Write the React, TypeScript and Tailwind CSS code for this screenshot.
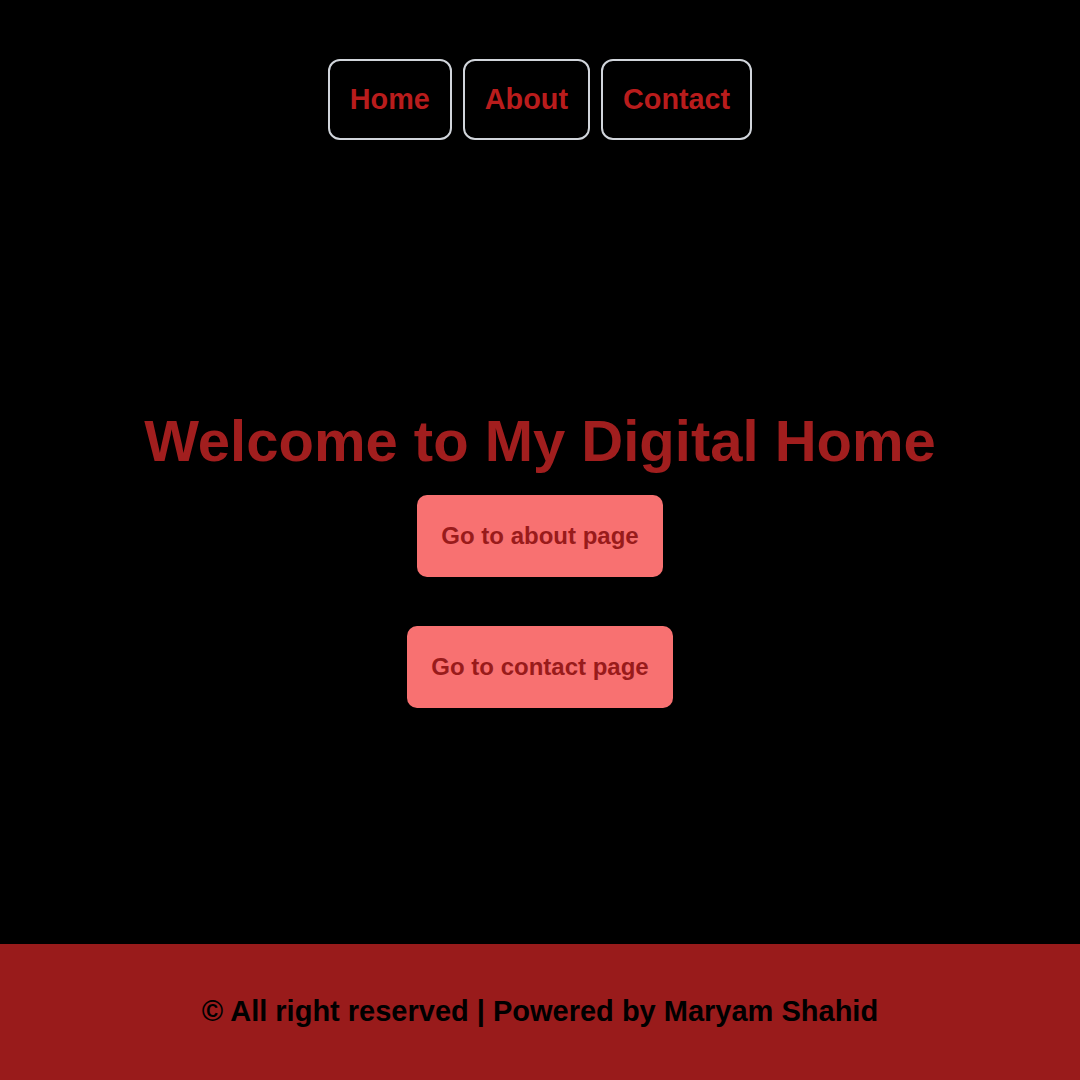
const links = ["Home", "About", "Contact"];

export default function App() {
  return (
    <div className="min-h-screen flex flex-col bg-black font-['Liberation_Sans',Arial,sans-serif]">
      <nav className="flex justify-center gap-[11px] pt-[59px]">
        {links.map((l) => (
          <a
            key={l}
            href="#"
            className="border-2 border-[#d1d5db] rounded-xl px-5 py-[22px] text-[28.8px] leading-[33px] font-bold text-[#b91c1c]"
          >
            {l}
          </a>
        ))}
      </nav>

      <main className="flex-1 flex flex-col items-center pt-[267px]">
        <h1 className="text-[58px] leading-[67px] font-bold text-[#a11e1e]">
          Welcome to My Digital Home
        </h1>
        <button className="mt-[21px] bg-[#f87171] text-[#991b1b] font-bold text-2xl leading-8 px-6 py-[25px] rounded-[10px]">
          Go to about page
        </button>
        <button className="mt-[49px] bg-[#f87171] text-[#991b1b] font-bold text-2xl leading-8 px-6 py-[25px] rounded-[10px]">
          Go to contact page
        </button>
      </main>

      <footer className="h-[136px] bg-[#991b1b] flex items-center justify-center">
        <p className="text-[29px] font-bold text-black">
          © All right reserved | Powered by Maryam Shahid
        </p>
      </footer>
    </div>
  );
}
